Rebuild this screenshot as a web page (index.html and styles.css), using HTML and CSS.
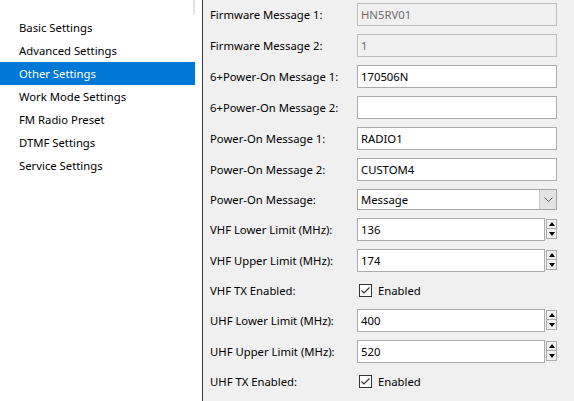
FILE: index.html
```html
<!DOCTYPE html>
<html lang="en">

<head>
    <meta charset="UTF-8">
    <meta name="viewport" content="width=device-width, initial-scale=1.0">
    <title>Other Settings</title>

    <link rel="stylesheet" href="styles.css">
</head>

<body>
    <div class="window">
        <nav class="sidebar">
            <span class="scroll-hint"></span>
            <ul class="nav-list">
                <li class="nav-item">Basic Settings</li>
                <li class="nav-item">Advanced Settings</li>
                <li class="nav-item active">Other Settings</li>
                <li class="nav-item">Work Mode Settings</li>
                <li class="nav-item">FM Radio Preset</li>
                <li class="nav-item">DTMF Settings</li>
                <li class="nav-item">Service Settings</li>
            </ul>
        </nav>

        <main class="panel">
            <div class="form-grid">
                <label class="field-label">Firmware Message 1:</label>
                <div class="text-box disabled">HN5RV01</div>

                <label class="field-label">Firmware Message 2:</label>
                <div class="text-box disabled">1</div>

                <label class="field-label">6+Power-On Message 1:</label>
                <div class="text-box">170506N</div>

                <label class="field-label">6+Power-On Message 2:</label>
                <div class="text-box"></div>

                <label class="field-label">Power-On Message 1:</label>
                <div class="text-box">RADIO1</div>

                <label class="field-label">Power-On Message 2:</label>
                <div class="text-box">CUSTOM4</div>

                <label class="field-label">Power-On Message:</label>
                <div class="combo">
                    <span class="combo-text">Message</span>
                    <span class="combo-btn">
                        <svg width="9" height="5" viewBox="0 0 9 5"><polyline points="0.5,0.5 4.5,4.5 8.5,0.5" fill="none" stroke="#5a5a5a" stroke-width="1"/></svg>
                    </span>
                </div>

                <label class="field-label">VHF Lower Limit (MHz):</label>
                <div class="spin">
                    <div class="text-box">136</div>
                    <div class="spin-btns">
                        <span class="spin-btn"><i class="arrow-up"></i></span>
                        <span class="spin-btn"><i class="arrow-down"></i></span>
                    </div>
                </div>

                <label class="field-label">VHF Upper Limit (MHz):</label>
                <div class="spin">
                    <div class="text-box">174</div>
                    <div class="spin-btns">
                        <span class="spin-btn"><i class="arrow-up"></i></span>
                        <span class="spin-btn"><i class="arrow-down"></i></span>
                    </div>
                </div>

                <label class="field-label">VHF TX Enabled:</label>
                <div class="check-row">
                    <span class="check-box">
                        <svg width="11" height="11" viewBox="0 0 11 11"><polyline points="1.5,5.5 4,8 9.5,2.5" fill="none" stroke="#333" stroke-width="1.2"/></svg>
                    </span>
                    <span class="check-text">Enabled</span>
                </div>

                <label class="field-label">UHF Lower Limit (MHz):</label>
                <div class="spin">
                    <div class="text-box">400</div>
                    <div class="spin-btns">
                        <span class="spin-btn"><i class="arrow-up"></i></span>
                        <span class="spin-btn"><i class="arrow-down"></i></span>
                    </div>
                </div>

                <label class="field-label">UHF Upper Limit (MHz):</label>
                <div class="spin">
                    <div class="text-box">520</div>
                    <div class="spin-btns">
                        <span class="spin-btn"><i class="arrow-up"></i></span>
                        <span class="spin-btn"><i class="arrow-down"></i></span>
                    </div>
                </div>

                <label class="field-label">UHF TX Enabled:</label>
                <div class="check-row">
                    <span class="check-box">
                        <svg width="11" height="11" viewBox="0 0 11 11"><polyline points="1.5,5.5 4,8 9.5,2.5" fill="none" stroke="#333" stroke-width="1.2"/></svg>
                    </span>
                    <span class="check-text">Enabled</span>
                </div>
            </div>
        </main>
    </div>
</body>

</html>
```

FILE: styles.css
```css
* {
    box-sizing: border-box;
}

body {
    margin: 0;
    font-family: "Noto Sans", "Open Sans", sans-serif;
    font-size: 11.3px;
    color: #000;
    background: #f0f0f0;
}

.window {
    display: flex;
    width: 574px;
    height: 401px;
    overflow: hidden;
}

.sidebar {
    position: relative;
    width: 203px;
    flex-shrink: 0;
    background: #fff;
    border-right: 1px solid #3c3c3c;
}

/* leftover scrollbar edge at the top of the list */
.scroll-hint {
    position: absolute;
    left: 193px;
    top: 0;
    width: 2px;
    height: 15px;
    background: #e3e3e3;
}

.nav-list {
    list-style: none;
    margin: 0;
    padding: 16px 0 0 0;
    width: 195px;
}

.nav-item {
    height: 23px;
    line-height: 23px;
    padding-left: 19px;
    white-space: nowrap;
}

.nav-item.active {
    background: #0078d7;
    color: #fff;
}

.panel {
    flex: 1;
    padding: 3px 0 0 7px;
}

.form-grid {
    display: grid;
    grid-template-columns: 147px 200px;
    row-gap: 8px;
    align-items: center;
}

.field-label {
    white-space: nowrap;
}

.text-box {
    height: 23px;
    line-height: 21px;
    padding-left: 3px;
    background: #fff;
    border: 1px solid #ababab;
    white-space: nowrap;
}

.text-box.disabled {
    background: #f0f0f0;
    border-color: #bcbcbc;
    color: #6d6d6d;
}

.combo {
    display: flex;
    height: 21px;
    background: #fff;
    border: 1px solid #a5a5a5;
}

.combo-text {
    flex: 1;
    line-height: 19px;
    padding-left: 3px;
}

.combo-btn {
    width: 17px;
    display: flex;
    align-items: center;
    justify-content: center;
    background: #e3e3e3;
    border-left: 1px solid #c4c4c4;
}

.spin {
    display: flex;
    gap: 1px;
}

.spin .text-box {
    flex: 1;
}

.spin-btns {
    display: flex;
    flex-direction: column;
    padding-top: 1px;
    width: 11px;
}

.spin-btn {
    height: 10px;
    display: flex;
    align-items: center;
    justify-content: center;
    background: #f0f0f0;
    border: 1px solid #ababab;
}

.spin-btn + .spin-btn {
    border-top: none;
}

.arrow-up,
.arrow-down {
    width: 0;
    height: 0;
    border-left: 3.5px solid transparent;
    border-right: 3.5px solid transparent;
}

.arrow-up {
    border-bottom: 4px solid #000;
}

.arrow-down {
    border-top: 4px solid #000;
}

.check-row {
    height: 21px;
    display: flex;
    align-items: center;
    padding-left: 2px;
}

.check-box {
    width: 13px;
    height: 13px;
    display: flex;
    align-items: center;
    justify-content: center;
    background: #fff;
    border: 1px solid #333;
}

.check-text {
    margin-left: 6px;
}
```
